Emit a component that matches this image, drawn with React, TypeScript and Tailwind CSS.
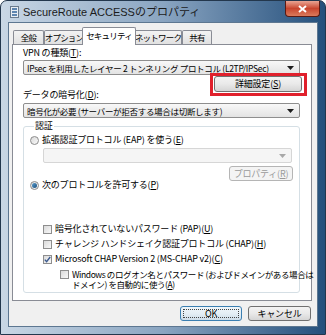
import React from 'react';

const K = ({ k }: { k: string }) => <span className="underline underline-offset-1">{k}</span>;

function Combo({ text, disabled = false }: { text?: string; disabled?: boolean }) {
  return (
    <div
      className={`flex h-[15px] items-center rounded-[2px] border pl-[3px] pr-[5px] ${
        disabled ? 'border-[#d6d6d6] bg-[#f5f5f5]' : 'border-[#8e8e8e] bg-gradient-to-b from-[#f8f8f8] to-[#e3e3e3]'
      }`}
    >
      <span className="min-w-0 flex-1 overflow-hidden whitespace-nowrap text-[8.5px] leading-[12px] tracking-[-0.3px]">{text}</span>
      <svg width="7" height="4" viewBox="0 0 7 4" className="shrink-0">
        <path d="M0 0h7L3.5 4z" fill={disabled ? '#a8a8a8' : '#1c1c1c'} />
      </svg>
    </div>
  );
}

function Radio({ checked = false }: { checked?: boolean }) {
  return (
    <span className="flex h-[9px] w-[9px] shrink-0 items-center justify-center rounded-full border border-[#8b8b8b] bg-gradient-to-br from-[#d9d9d9] to-[#fafafa]">
      {checked && <span className="h-[5px] w-[5px] rounded-full bg-gradient-to-br from-[#5a9fd0] to-[#1d4f7c]" />}
    </span>
  );
}

function Check({ checked = false }: { checked?: boolean }) {
  return (
    <span className="flex h-[9px] w-[9px] shrink-0 items-center justify-center border border-[#8e8e8e] bg-gradient-to-br from-[#dadada] to-[#f8f8f8]">
      {checked && (
        <svg width="7" height="7" viewBox="0 0 7 7">
          <path d="M0.8 3.6 L2.6 5.6 L6.2 1" stroke="#3b5a8f" strokeWidth="1.4" fill="none" />
        </svg>
      )}
    </span>
  );
}

function Tab({ label, active = false, w }: { label: string; active?: boolean; w: string }) {
  if (active) {
    return (
      <div className={`relative z-10 -mx-[2px] mb-[-1px] flex h-[18px] ${w} items-center justify-center whitespace-nowrap rounded-t-[2px] border border-b-0 border-[#898c95] bg-white pb-[2px] text-[8.5px] tracking-[-0.8px]`}>
        {label}
      </div>
    );
  }
  return (
    <div className={`mt-[3px] flex h-[14px] ${w} items-center justify-center whitespace-nowrap rounded-t-[2px] border border-b-0 border-[#898c95] bg-gradient-to-b from-[#f3f3f3] to-[#e1e1e1] text-[8.5px] tracking-[-0.8px]`}>
      {label}
    </div>
  );
}

export default function App() {
  return (
    <div className="h-[335px] w-[326px] overflow-hidden bg-white font-['Noto_Sans_CJK_JP',sans-serif] text-[9px] tracking-[-0.2px] text-black">
      <div className="flex h-full flex-col rounded-t-[7px] border border-[#23374d] bg-gradient-to-r from-[#c9d7e5] via-[#8aa5c1] to-[#24507c]">
        {/* title bar */}
        <div className="flex h-[21px] items-center pl-[9px]">
          <svg width="9" height="12" viewBox="0 0 9 12" className="shrink-0">
            <rect x="0.5" y="0.5" width="8" height="11" fill="#e9eef3" stroke="#6b7c8e" />
            <rect x="2" y="2" width="5" height="2" fill="#5f86b0" />
            <rect x="2" y="5" width="5" height="2" fill="#5f86b0" />
            <rect x="2" y="8" width="5" height="2" fill="#5f86b0" />
          </svg>
          <span className="ml-[4px] font-['Liberation_Sans','Noto_Sans_CJK_JP',sans-serif] text-[11px] leading-[14px] tracking-normal text-[#1b1b1b]">
            SecureRoute ACCESSのプロパティ
          </span>
          <div className="mr-[5px] ml-auto flex h-[16px] w-[35px] self-start items-center justify-center rounded-b-[4px] border border-t-0 border-[#5a1a13] bg-gradient-to-b from-[#e8a493] via-[#c8442d] to-[#d97a5c]">
            <svg width="9" height="8" viewBox="0 0 9 8">
              <path d="M1 1 L8 7 M8 1 L1 7" stroke="#ffffff" strokeWidth="2" />
            </svg>
          </div>
        </div>

        {/* client area */}
        <div className="flex flex-1 px-[7px] pb-[7px]">
          <div className="flex flex-1 flex-col border border-[#5d7791] bg-[#f0f0f0] pt-[4px]">
            {/* tabs */}
            <div className="ml-[4px] flex items-end">
              <Tab label="全般" w="w-[31px]" />
              <Tab label="オプション" w="w-[40px]" />
              <Tab label="セキュリティ" w="w-[54px]" active />
              <Tab label="ネットワーク" w="w-[48px]" />
              <Tab label="共有" w="w-[30px]" />
            </div>

            {/* panel */}
            <div className="ml-[3px] flex h-[257px] w-[300px] flex-col border border-[#898c95] bg-white pl-[10px] pr-[11px] pt-[2px]">
              <div className="leading-[12px]">
                VPN の種類(<K k="T" />):
              </div>
              <div className="mt-[1px]">
                <Combo text="IPsec を利用したレイヤー 2 トンネリング プロトコル (L2TP/IPSec)" />
              </div>
              <div className="mt-[1px] flex justify-end">
                <div className="relative -mr-[2px]">
                  <button className="flex h-[16px] w-[88px] items-center justify-center rounded-[3px] border border-[#707070] bg-gradient-to-b from-[#f3f3f3] via-[#e9e9e9] to-[#d5d5d5] leading-[12px]">
                    詳細設定(<K k="S" />)
                  </button>
                  <div className="absolute -bottom-[4px] -left-[4px] -right-[5px] -top-[3px] border-[3px] border-[#e0202c]" />
                </div>
              </div>
              <div className="-mt-[3px] leading-[12px]">
                データの暗号化(<K k="D" />):
              </div>
              <div className="mt-[2px]">
                <Combo text="暗号化が必要 (サーバーが拒否する場合は切断します)" />
              </div>

              <fieldset className="mt-[2px] min-w-0 rounded-[3px] border border-[#d5dfe5] pb-[2px] pl-[6px] pr-[6px]">
                <legend className="ml-[4px] px-[1px] leading-[12px]">認証</legend>
                <div className="mt-[2px] flex h-[12px] items-center">
                  <Radio />
                  <span className="ml-[3px] whitespace-nowrap leading-[12px]">
                    拡張認証プロトコル (EAP) を使う(<K k="E" />)
                  </span>
                </div>
                <div className="ml-[13px] mt-[2px] mr-[1px]">
                  <Combo disabled />
                </div>
                <div className="mt-[3px] flex justify-end">
                  <button className="flex h-[15px] w-[64px] items-center justify-center whitespace-nowrap rounded-[3px] border border-[#b5b5b5] bg-[#f4f4f4] leading-[12px] text-[#9a9a9a]">
                    プロパティ(<K k="R" />)
                  </button>
                </div>
                <div className="-mt-[2px] flex h-[12px] items-center">
                  <Radio checked />
                  <span className="ml-[3px] whitespace-nowrap leading-[12px]">
                    次のプロトコルを許可する(<K k="P" />)
                  </span>
                </div>

                <div className="ml-[13px] mt-[32px] flex flex-col gap-[3px] whitespace-nowrap">
                  <div className="flex h-[12px] items-center">
                    <Check />
                    <span className="ml-[3px]">
                      暗号化されていないパスワード (PAP)(<K k="U" />)
                    </span>
                  </div>
                  <div className="flex h-[12px] items-center">
                    <Check />
                    <span className="ml-[3px]">
                      チャレンジ ハンドシェイク認証プロトコル (CHAP)(<K k="H" />)
                    </span>
                  </div>
                  <div className="flex h-[12px] items-center">
                    <Check checked />
                    <span className="ml-[3px]">
                      Microsoft CHAP Version 2 (MS-CHAP v2)(<K k="C" />)
                    </span>
                  </div>
                  <div className="ml-[17px] flex items-start">
                    <span className="mt-[2px]">
                      <Check />
                    </span>
                    <div className="ml-[3px] flex flex-col text-[8.5px] leading-[12px] tracking-[-0.4px]">
                      <span>Windows のログオン名とパスワード (およびドメインがある場合は</span>
                      <span className="-mt-[2px]">
                        ドメイン) を自動的に使う(<K k="A" />)
                      </span>
                    </div>
                  </div>
                </div>
              </fieldset>
            </div>

            {/* dialog buttons */}
            <div className="mt-[5px] flex justify-end gap-[6px] pr-[6px]">
              <button className="flex h-[15px] w-[62px] items-center justify-center rounded-[3px] border border-[#3c7fb1] bg-gradient-to-b from-[#f0f6fa] via-[#e4eef5] to-[#cddde9] p-[2px]">
                <span className="flex h-full w-full items-center justify-center border border-dotted border-[#444] leading-[10px]">OK</span>
              </button>
              <button className="flex h-[15px] w-[63px] items-center justify-center rounded-[3px] border border-[#707070] bg-gradient-to-b from-[#f3f3f3] via-[#e9e9e9] to-[#d5d5d5] leading-[12px]">
                キャンセル
              </button>
            </div>
          </div>
        </div>
      </div>
    </div>
  );
}
